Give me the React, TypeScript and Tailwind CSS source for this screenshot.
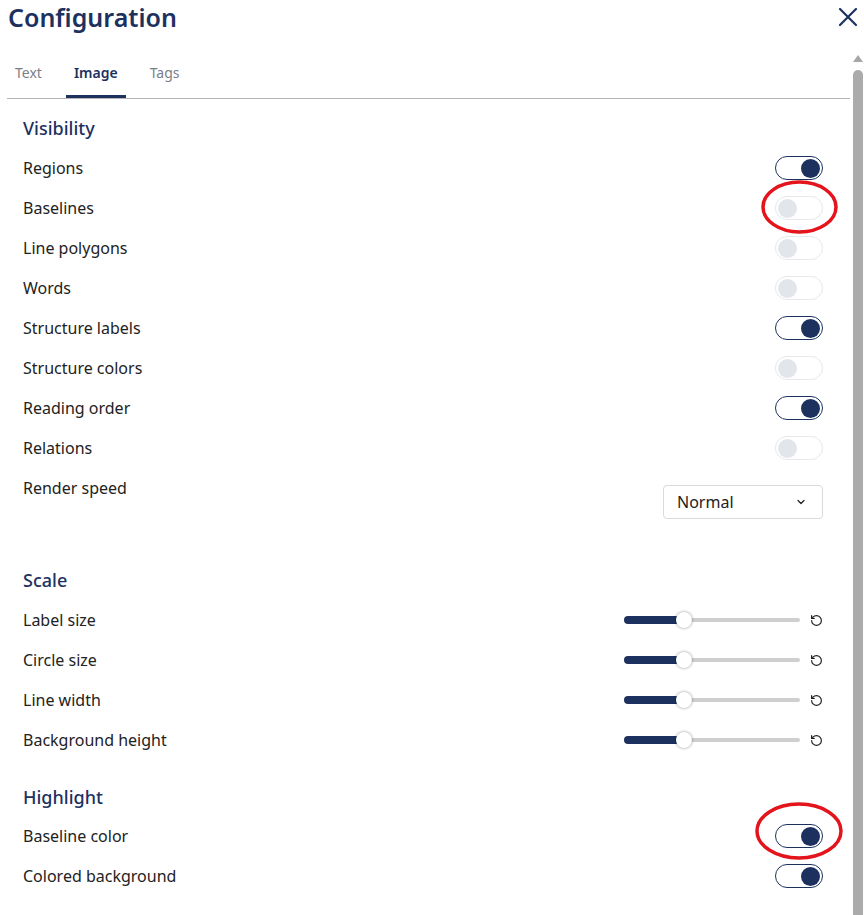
import { ChevronDown, RotateCcw } from "lucide-react";

const navy = "#1d315f";

type ToggleProps = { on: boolean };

const Toggle = ({ on }: ToggleProps) => (
  <div
    className={
      on
        ? "flex h-[24px] w-[48px] items-center justify-end rounded-full border border-[#1d315f] bg-white px-[2px]"
        : "flex h-[24px] w-[48px] items-center justify-start rounded-full border border-[#e6e8ec] bg-white px-[2px]"
    }
  >
    <span
      className={
        on
          ? "h-[19px] w-[19px] rounded-full bg-[#1d315f]"
          : "h-[19px] w-[19px] rounded-full bg-[#e2e5ea]"
      }
    />
  </div>
);

const ToggleRow = ({ label, on }: { label: string; on: boolean }) => (
  <div className="flex h-[40px] items-center justify-between">
    <span>{label}</span>
    <Toggle on={on} />
  </div>
);

const SliderRow = ({ label }: { label: string }) => (
  <div className="flex h-[40px] items-center justify-between">
    <span>{label}</span>
    <div className="flex items-center gap-[10px]">
      <div className="relative flex h-[16px] w-[176px] items-center">
        <div className="h-[8px] w-[60px] rounded-l-full bg-[#1d315f]" />
        <div className="h-[4px] flex-1 rounded-r-full bg-[#cfcfcf]" />
        <span className="absolute left-[52px] top-0 h-[16px] w-[16px] rounded-full bg-white shadow-[0_0_3px_rgba(0,0,0,0.45)]" />
      </div>
      <RotateCcw size={13} strokeWidth={2.2} className="text-[#222]" />
    </div>
  </div>
);

const Heading = ({ children }: { children: string }) => (
  <div className="flex h-[40px] items-center text-[18px] font-medium text-[#1d315f]">
    {children}
  </div>
);

export default function App() {
  return (
    <div
      className="relative h-[915px] w-[864px] overflow-hidden bg-white text-[16px] text-[#222]"
      style={{ fontFamily: '"Noto Sans", "Open Sans", sans-serif' }}
    >
      {/* Header */}
      <div className="flex h-[50px] items-start justify-between pl-2 pr-[6px]">
        <h1 className="text-[25px] font-semibold leading-[34px] text-[#1d315f]">
          Configuration
        </h1>
        <svg width="20" height="20" viewBox="0 0 20 20" className="mt-[7px]">
          <path
            d="M2 2 L18 18 M18 2 L2 18"
            stroke={navy}
            strokeWidth="2.2"
            strokeLinecap="round"
          />
        </svg>
      </div>

      <div className="flex">
        {/* Scroll area */}
        <div className="w-[852px] pl-[7px] pr-[2px]">
          {/* Tabs */}
          <div className="flex gap-4 border-b border-[#b5b5b5] text-[14px]">
            <div className="flex h-[48px] items-center border-b-[3px] border-transparent px-2 text-[#7a7f87]">
              Text
            </div>
            <div className="flex h-[48px] items-center border-b-[3px] border-[#1d315f] px-2 font-semibold text-[#1d315f]">
              Image
            </div>
            <div className="flex h-[48px] items-center border-b-[3px] border-transparent px-2 text-[#7a7f87]">
              Tags
            </div>
          </div>

          <div className="pl-4 pr-[27px] pt-[9px]">
            {/* Visibility */}
            <Heading>Visibility</Heading>
            <ToggleRow label="Regions" on />
            <ToggleRow label="Baselines" on={false} />
            <ToggleRow label="Line polygons" on={false} />
            <ToggleRow label="Words" on={false} />
            <ToggleRow label="Structure labels" on />
            <ToggleRow label="Structure colors" on={false} />
            <ToggleRow label="Reading order" on />
            <ToggleRow label="Relations" on={false} />
            <div className="flex items-start justify-between">
              <span className="leading-[40px]">Render speed</span>
              <div className="mt-[17px] flex h-[34px] w-[160px] items-center justify-between rounded-[4px] border border-[#d9d9d9] pl-[13px] pr-[15px]">
                <span>Normal</span>
                <ChevronDown size={12} strokeWidth={2.5} />
              </div>
            </div>

            {/* Scale */}
            <div className="mt-[41px]">
              <Heading>Scale</Heading>
            </div>
            <SliderRow label="Label size" />
            <SliderRow label="Circle size" />
            <SliderRow label="Line width" />
            <SliderRow label="Background height" />

            {/* Highlight */}
            <div className="mt-[17px]">
              <Heading>Highlight</Heading>
            </div>
            <div className="-mt-[1px]">
              <ToggleRow label="Baseline color" on />
              <ToggleRow label="Colored background" on />
            </div>
          </div>
        </div>

        {/* Scrollbar */}
        <div className="flex w-[12px] flex-col items-center pt-[5px]">
          <svg width="10" height="7" viewBox="0 0 10 7">
            <path d="M5 0 L10 7 L0 7 Z" fill="#a6a6a6" />
          </svg>
          <div className="mt-[8px] h-[900px] w-[10px] rounded-t-full bg-[#ababab]" />
        </div>
      </div>

      {/* Annotation ellipses */}
      <svg
        className="pointer-events-none absolute left-0 top-0"
        width="864"
        height="915"
      >
        <ellipse cx="799.5" cy="207" rx="36.5" ry="25" fill="none" stroke="#e3141b" strokeWidth="3.5" />
        <ellipse cx="799" cy="831" rx="42" ry="27" fill="none" stroke="#e3141b" strokeWidth="3.5" />
      </svg>
    </div>
  );
}
